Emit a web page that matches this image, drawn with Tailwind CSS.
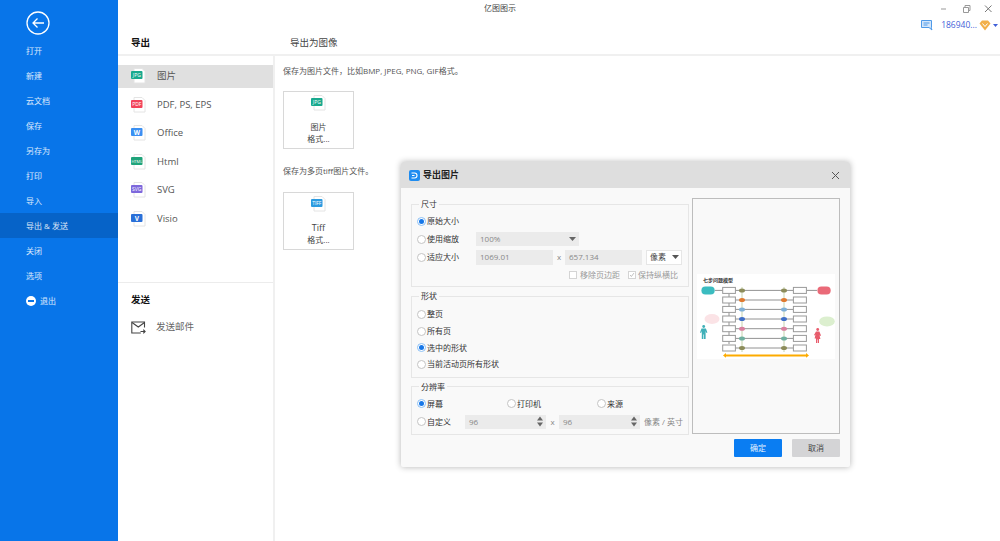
<!doctype html>
<html lang="zh">
<head>
  <meta charset="utf-8">
  <title>亿图图示</title>
  <script src="https://cdn.jsdelivr.net/npm/@tailwindcss/browser@4"></script>
</head>
<body class="relative flex w-[1000px] h-[541px] overflow-hidden bg-white font-['Open_Sans','Noto_Sans_CJK_SC',sans-serif] text-[8px] text-[#555]">

<!-- sidebar -->
<aside class="w-[118px] h-full bg-[#0875e9] text-white/85 shrink-0">
  <div class="pt-[11px] pl-[26px] h-[38px]">
    <svg width="24" height="24" viewBox="0 0 24 24" fill="none" stroke="white">
      <circle cx="12" cy="12" r="11" stroke-width="1.3"/>
      <path d="M18 12H7M11.5 7.5 7 12l4.5 4.5" stroke-width="1.3"/>
    </svg>
  </div>
  <div class="h-[25px] pl-[26px] flex items-center">打开</div>
  <div class="h-[25px] pl-[26px] flex items-center">新建</div>
  <div class="h-[25px] pl-[26px] flex items-center">云文档</div>
  <div class="h-[25px] pl-[26px] flex items-center">保存</div>
  <div class="h-[25px] pl-[26px] flex items-center">另存为</div>
  <div class="h-[25px] pl-[26px] flex items-center">打印</div>
  <div class="h-[25px] pl-[26px] flex items-center">导入</div>
  <div class="h-[25px] pl-[26px] flex items-center bg-[#0663c8]">导出 &amp; 发送</div>
  <div class="h-[25px] pl-[26px] flex items-center">关闭</div>
  <div class="h-[25px] pl-[26px] flex items-center">选项</div>
  <div class="h-[25px] pl-[26px] flex items-center gap-[4px]">
    <svg width="10" height="10" viewBox="0 0 10 10"><circle cx="5" cy="5" r="5" fill="white"/><rect x="2" y="4" width="6" height="2" fill="#0875e9"/></svg>
    退出
  </div>
</aside>

<div class="flex-1 flex flex-col min-w-0">
  <!-- header -->
  <header class="h-[56px] border-b-2 border-[#f0f0f0] shrink-0">
    <div class="h-[16px] flex items-center pl-[366px] pr-[7px] text-[#444]">
      <span>亿图图示</span>
      <div class="ml-auto flex items-center gap-[13px] text-[#888]">
        <svg width="9" height="9" viewBox="0 0 9 9" fill="none" stroke="#999"><path d="M1 5h5"/></svg>
        <svg width="9" height="9" viewBox="0 0 9 9" fill="none" stroke="#999"><path d="M1.500 3.500h5v5h-5zM3 3.500V1.500h5v5H6.500"/></svg>
        <svg width="9" height="9" viewBox="0 0 9 9" fill="none" stroke="#777"><path d="m1 1.500 6.500 6.500M7.500 1.500 1 8"/></svg>
      </div>
    </div>
    <div class="h-[18px] flex items-center justify-end">
      <svg class="mr-[8px]" width="12" height="11" viewBox="0 0 12 11" fill="none"><path d="M.5.500h10v7H10l1 2.500-3-2.500H.5z" fill="#d4e6fa" stroke="#4f9ae8"/><path d="M2.500 3h6M2.500 5h4" stroke="#4f9ae8"/></svg>
      <span class="text-[#3f5fd8] text-[8.500px]">186940...</span>
      <svg class="ml-[2px]" width="12" height="11" viewBox="0 0 12 11"><path d="M3 .5h6L11.500 3.500 6 10.500.5 3.500z" fill="#f2b04a"/><path d="m3.500 3.500 2.500 3 2.500-3" stroke="white" fill="none"/></svg>
      <svg class="ml-[2px] mr-[2px]" width="5" height="3" viewBox="0 0 5 3"><path d="M0 0h5L2.500 3z" fill="#3f5fd8"/></svg>
    </div>
    <div class="h-[18px] flex items-center">
      <span class="w-[172px] pl-[13px] text-[#111] font-bold text-[9.500px]">导出</span>
      <span class="text-[#444] text-[9.500px]">导出为图像</span>
    </div>
  </header>

  <div class="flex-1 flex min-h-0">
    <!-- export types -->
    <nav class="w-[157px] border-r-2 border-[#f0f0f0] flex flex-col pt-[9px] text-[9.500px] shrink-0">
      <div class="h-[22.500px] mb-[6px] flex items-center pl-[13px] gap-[10px] bg-[#e0e0e0]">
        <svg width="16" height="16" viewBox="0 0 16 16"><path d="M3 .5h8l3 3v11.500H3z" fill="white" stroke="#e4e4e4"/><rect y="3" width="11.500" height="8" rx="1" fill="#19a98e"/><text x="5.800" y="9" font-size="5" fill="white" text-anchor="middle">JPG</text></svg>
        <span>图片</span>
      </div>
      <div class="h-[22.500px] mb-[6px] flex items-center pl-[13px] gap-[10px]">
        <svg width="16" height="16" viewBox="0 0 16 16"><path d="M3 .5h8l3 3v11.500H3z" fill="white" stroke="#e4e4e4"/><rect y="3" width="11.500" height="8" rx="1" fill="#f2435a"/><text x="5.800" y="9" font-size="5" fill="white" text-anchor="middle">PDF</text></svg>
        <span>PDF, PS, EPS</span>
      </div>
      <div class="h-[22.500px] mb-[6px] flex items-center pl-[13px] gap-[10px]">
        <svg width="16" height="16" viewBox="0 0 16 16"><path d="M3 .5h8l3 3v11.500H3z" fill="white" stroke="#e4e4e4"/><rect y="3" width="11.500" height="8" rx="1" fill="#3a8ff2"/><text x="5.800" y="9.500" font-size="6.500" font-weight="bold" fill="white" text-anchor="middle">W</text></svg>
        <span>Office</span>
      </div>
      <div class="h-[22.500px] mb-[6px] flex items-center pl-[13px] gap-[10px]">
        <svg width="16" height="16" viewBox="0 0 16 16"><path d="M3 .5h8l3 3v11.500H3z" fill="white" stroke="#e4e4e4"/><rect y="3" width="11.500" height="8" rx="1" fill="#1fa37a"/><text x="5.800" y="8.800" font-size="4" fill="white" text-anchor="middle">HTML</text></svg>
        <span>Html</span>
      </div>
      <div class="h-[22.500px] mb-[6px] flex items-center pl-[13px] gap-[10px]">
        <svg width="16" height="16" viewBox="0 0 16 16"><path d="M3 .5h8l3 3v11.500H3z" fill="white" stroke="#e4e4e4"/><rect y="3" width="11.500" height="8" rx="1" fill="#7d68dc"/><text x="5.800" y="9" font-size="5" fill="white" text-anchor="middle">SVG</text></svg>
        <span>SVG</span>
      </div>
      <div class="h-[22.500px] flex items-center pl-[13px] gap-[10px]">
        <svg width="16" height="16" viewBox="0 0 16 16"><path d="M3 .5h8l3 3v11.500H3z" fill="white" stroke="#e4e4e4"/><rect y="3" width="11.500" height="8" rx="1" fill="#2a70d8"/><text x="5.800" y="9.500" font-size="6.500" font-weight="bold" fill="white" text-anchor="middle">V</text></svg>
        <span>Visio</span>
      </div>
      <div class="mt-[52px] border-t border-[#ececec] pl-[13px] pt-[10px]">
        <div class="text-[#111] font-bold h-[14px] leading-[14px]">发送</div>
        <div class="flex items-center gap-[10px] mt-[13px] text-[#666] h-[14px]">
          <svg width="15" height="13" viewBox="0 0 15 13" fill="none" stroke="#444" stroke-width="1.100"><path d="M13.500 6.500V1H.8v11h9"/><path d="m1 1.500 6.300 4.500 6.200-4.500"/><path d="M9.500 10.500h4.500m-1.700-1.800 1.800 1.800-1.800 1.800"/></svg>
          <span>发送邮件</span>
        </div>
      </div>
    </nav>

    <!-- export formats -->
    <main class="flex-1 pl-[8px] pt-[9px] text-[#555]">
      <p class="h-[12px] leading-[12px]">保存为图片文件，比如BMP, JPEG, PNG, GIF格式。</p>
      <div class="mt-[14px] w-[71px] h-[58px] border border-[#d8d8d8] flex flex-col items-center pt-[3px] text-[#444]">
        <svg width="16" height="16" viewBox="0 0 16 16"><path d="M3 .5h8l3 3v11.500H3z" fill="white" stroke="#e4e4e4"/><rect y="3" width="11.500" height="8" rx="1" fill="#19a98e"/><text x="5.800" y="9" font-size="5" fill="white" text-anchor="middle">JPG</text></svg>
        <span class="mt-[10px] leading-[12px]">图片</span>
        <span class="leading-[12px]">格式...</span>
      </div>
      <p class="mt-[16px] h-[12px] leading-[12px]">保存为多页tiff图片文件。</p>
      <div class="mt-[15px] w-[71px] h-[58px] border border-[#d8d8d8] flex flex-col items-center pt-[3px] text-[#444]">
        <svg width="16" height="16" viewBox="0 0 16 16"><path d="M3 .5h8l3 3v11.500H3z" fill="white" stroke="#e4e4e4"/><rect y="3" width="11.500" height="8" rx="1" fill="#2c9be0"/><text x="5.800" y="9" font-size="5" fill="white" text-anchor="middle">TIFF</text></svg>
        <span class="mt-[10px] leading-[12px] text-[9px]">Tiff</span>
        <span class="leading-[12px]">格式...</span>
      </div>
    </main>
  </div>
</div>

<!-- export dialog -->
<section class="absolute left-[401px] top-[162px] w-[449px] h-[305px] bg-[#f9f9f9] rounded-[2px] shadow-[0_0_6px_rgba(0,0,0,0.3)] text-[#333]">
  <div class="h-[26px] bg-[#dedede] flex items-center pl-[8px] pr-[10px] rounded-t-[2px]">
    <svg width="11" height="11" viewBox="0 0 11 11"><rect width="11" height="11" rx="2" fill="#1f8cf0"/><path d="M2.500 3h3a2.500 2.500 0 0 1 0 5h-3M3 5.500h2.500" fill="none" stroke="white" stroke-width="1.100"/></svg>
    <span class="ml-[3px] font-bold text-[9px] text-[#222]">导出图片</span>
    <svg class="ml-auto" width="9" height="9" viewBox="0 0 9 9" fill="none" stroke="#555"><path d="m1 1 7 7M8 1 1 8"/></svg>
  </div>

  <div class="flex pl-[10px] pt-[10px] gap-[3px]">
    <div class="w-[278px] shrink-0">
      <fieldset class="border border-[#e6e6e6] pl-[5px] pr-[5px] pb-[2px]">
        <legend class="ml-[2px] px-[2px] h-[12px] leading-[12px]">尺寸</legend>
        <div class="pt-[2px]">
          <div class="h-[18px] flex items-center">
            <span class="w-[9px] h-[9px] rounded-full border border-[#8cc0f5] bg-white flex items-center justify-center"><span class="w-[5px] h-[5px] rounded-full bg-[#1677e8]"></span></span>
            <span class="ml-[1px]">原始大小</span>
          </div>
          <div class="h-[18px] flex items-center">
            <span class="w-[59px] flex items-center shrink-0"><span class="w-[9px] h-[9px] rounded-full border border-[#c4c4c4] bg-white"></span><span class="ml-[1px]">使用缩放</span></span>
            <div class="w-[103px] h-[14px] bg-[#ebebeb] flex items-center pl-[4px] pr-[3px] text-[#888]">100%<svg class="ml-auto" width="7" height="4" viewBox="0 0 7 4"><path d="M0 0h7L3.500 4z" fill="#666"/></svg></div>
          </div>
          <div class="h-[18px] flex items-center">
            <span class="w-[59px] flex items-center shrink-0"><span class="w-[9px] h-[9px] rounded-full border border-[#c4c4c4] bg-white"></span><span class="ml-[1px]">适应大小</span></span>
            <div class="w-[77px] h-[15px] bg-[#ebebeb] flex items-center pl-[4px] text-[#888]">1069.01</div>
            <span class="w-[12px] text-center text-[#888]">x</span>
            <div class="w-[77px] h-[15px] bg-[#ebebeb] flex items-center pl-[4px] text-[#888]">657.134</div>
            <div class="ml-[4px] w-[36px] h-[15px] bg-white border border-[#e6e6e6] flex items-center pl-[3px] pr-[2px] text-[#444]">像素<svg class="ml-auto" width="7" height="4" viewBox="0 0 7 4"><path d="M0 0h7L3.500 4z" fill="#555"/></svg></div>
          </div>
          <div class="h-[18px] flex items-center justify-end pr-[5px] text-[#999]">
            <span class="w-[8px] h-[8px] border border-[#d4d4d4] bg-white"></span>
            <span class="ml-[3px]">移除页边距</span>
            <svg class="ml-[8px] bg-white border border-[#d4d4d4]" width="8" height="8" viewBox="0 0 8 8" fill="none" stroke="#aaa"><path d="m1.500 4 1.700 2 3.300-4.500"/></svg>
            <span class="ml-[2px]">保持纵横比</span>
          </div>
        </div>
      </fieldset>

      <fieldset class="mt-[3px] border border-[#e6e6e6] pl-[5px] pr-[5px] pb-[4px]">
        <legend class="ml-[2px] px-[2px] h-[12px] leading-[12px]">形状</legend>
        <div class="pt-[4px]">
          <div class="h-[16.700px] flex items-center"><span class="w-[9px] h-[9px] rounded-full border border-[#c4c4c4] bg-white"></span><span class="ml-[1px]">整页</span></div>
          <div class="h-[16.700px] flex items-center"><span class="w-[9px] h-[9px] rounded-full border border-[#c4c4c4] bg-white"></span><span class="ml-[1px]">所有页</span></div>
          <div class="h-[16.700px] flex items-center">
            <span class="w-[9px] h-[9px] rounded-full border border-[#8cc0f5] bg-white flex items-center justify-center"><span class="w-[5px] h-[5px] rounded-full bg-[#1677e8]"></span></span>
            <span class="ml-[1px]">选中的形状</span>
          </div>
          <div class="h-[16.700px] flex items-center"><span class="w-[9px] h-[9px] rounded-full border border-[#c4c4c4] bg-white"></span><span class="ml-[1px]">当前活动页所有形状</span></div>
        </div>
      </fieldset>

      <fieldset class="mt-[3px] border border-[#e6e6e6] pl-[5px] pr-[5px] pb-[3px]">
        <legend class="ml-[2px] px-[2px] h-[12px] leading-[12px]">分辨率</legend>
        <div class="pt-[2px]">
          <div class="h-[18px] flex items-center">
            <span class="w-[90px] flex items-center shrink-0">
              <span class="w-[9px] h-[9px] rounded-full border border-[#8cc0f5] bg-white flex items-center justify-center"><span class="w-[5px] h-[5px] rounded-full bg-[#1677e8]"></span></span>
              <span class="ml-[1px]">屏幕</span>
            </span>
            <span class="w-[90px] flex items-center shrink-0"><span class="w-[9px] h-[9px] rounded-full border border-[#c4c4c4] bg-white"></span><span class="ml-[1px]">打印机</span></span>
            <span class="flex items-center"><span class="w-[9px] h-[9px] rounded-full border border-[#c4c4c4] bg-white"></span><span class="ml-[1px]">来源</span></span>
          </div>
          <div class="h-[18px] flex items-center">
            <span class="w-[48px] flex items-center shrink-0"><span class="w-[9px] h-[9px] rounded-full border border-[#c4c4c4] bg-white"></span><span class="ml-[1px]">自定义</span></span>
            <div class="w-[81px] h-[14px] bg-[#ebebeb] flex items-center pl-[4px] pr-[3px] text-[#888]">96
              <svg class="ml-auto" width="6" height="11" viewBox="0 0 6 11"><path d="M0 4.500h6L3 .5zM0 6.500h6L3 10.500z" fill="#666"/></svg>
            </div>
            <span class="w-[13px] text-center text-[#888]">x</span>
            <div class="w-[81px] h-[14px] bg-[#ebebeb] flex items-center pl-[4px] pr-[3px] text-[#888]">96
              <svg class="ml-auto" width="6" height="11" viewBox="0 0 6 11"><path d="M0 4.500h6L3 .5zM0 6.500h6L3 10.500z" fill="#666"/></svg>
            </div>
            <span class="ml-[4px] text-[#888]">像素 / 英寸</span>
          </div>
        </div>
      </fieldset>
    </div>

    <!-- preview -->
    <div class="w-[148px] h-[236px] border border-[#bdbdbd] flex items-center justify-center">
      <svg width="138" height="85" viewBox="0 0 138 85" class="bg-white" fill="none">
        <text x="6" y="8" font-size="5" font-weight="bold" fill="#333">七步问题模型</text>
        <g stroke="#777" stroke-width="0.800">
          <path d="M18 16.400h78M109 16.400h11M38 26h58M38 35.400h58M38 45h58M38 54.700h58M38 64.400h58M38 74h58"/>
          <path d="M32 20v50"/>
        </g>
        <g stroke-width="0.800">
          <path d="M45 13v65M87 13v65" stroke="#b8c89a"/>
        </g>
        <g fill="white" stroke="#999">
          <rect x="25.700" y="13.400" width="12.700" height="6"/><rect x="25.700" y="23" width="12.700" height="6"/><rect x="25.700" y="32.400" width="12.700" height="6"/><rect x="25.700" y="42" width="12.700" height="6"/><rect x="25.700" y="51.700" width="12.700" height="6"/><rect x="25.700" y="61.400" width="12.700" height="6"/><rect x="25.700" y="71" width="12.700" height="6"/>
          <rect x="96.400" y="13.400" width="13" height="6"/><rect x="96.400" y="23" width="13" height="6"/><rect x="96.400" y="32.400" width="13" height="6"/><rect x="96.400" y="42" width="13" height="6"/><rect x="96.400" y="51.700" width="13" height="6"/><rect x="96.400" y="61.400" width="13" height="6"/><rect x="96.400" y="71" width="13" height="6"/>
        </g>
        <g fill="#8c8c5a"><ellipse cx="45" cy="16.400" rx="3" ry="2"/><ellipse cx="87" cy="16.400" rx="3" ry="2"/><ellipse cx="45" cy="74" rx="3" ry="2"/><ellipse cx="87" cy="74" rx="3" ry="2"/></g>
        <g fill="#e07a30"><ellipse cx="45" cy="26" rx="3" ry="2"/><ellipse cx="87" cy="26" rx="3" ry="2"/></g>
        <g fill="#7fb0d8"><ellipse cx="45" cy="35.400" rx="3" ry="2"/><ellipse cx="87" cy="35.400" rx="3" ry="2"/></g>
        <g fill="#4070c8"><ellipse cx="45" cy="45" rx="3" ry="2"/><ellipse cx="87" cy="45" rx="3" ry="2"/></g>
        <g fill="#d9809f"><ellipse cx="45" cy="54.700" rx="3" ry="2"/><ellipse cx="87" cy="54.700" rx="3" ry="2"/></g>
        <g fill="#70b0a0"><ellipse cx="45" cy="64.400" rx="3" ry="2"/><ellipse cx="87" cy="64.400" rx="3" ry="2"/></g>
        <rect x="4.400" y="12.500" width="13.300" height="8" rx="4" fill="#3bbcc0"/>
        <rect x="120.400" y="12.500" width="13.300" height="8" rx="4" fill="#ea6a78"/>
        <path d="M26 81.400 29 79v1.400h80V79l3 2.400-3 2.400v-1.400H29v1.400z" fill="#fdab00"/>
        <ellipse cx="15" cy="45" rx="7.500" ry="5" fill="#fbe3e6"/>
        <ellipse cx="130" cy="47.400" rx="7.800" ry="5" fill="#dcefcf"/>
        <g fill="#3fb0b8"><circle cx="6.700" cy="52.500" r="1.400"/><path d="M4.500 54.500h4.400l1.500 4-1 .5-.8-2v8H7v-4.500h-.6V65H4.800v-8l-.8 2-1-.5z"/></g>
        <g fill="#e85c6c"><circle cx="120.700" cy="55.500" r="1.400"/><path d="M119 57.500h3.400l1.600 4-1 .5-.6-1.500 1 4.500h-1.400V69h-1.200v-3.500h-.6V69h-1.200v-4.500h-1.400l1-4.500-.6 1.500-1-.5z"/></g>
      </svg>
    </div>
  </div>

  <div class="flex justify-end gap-[10px] pr-[10px] pt-[4px]">
    <button class="w-[48px] h-[18px] bg-[#0a7df2] text-white/90 rounded-[1px]">确定</button>
    <button class="w-[48px] h-[18px] bg-[#d4d4d6] text-[#444] rounded-[1px]">取消</button>
  </div>
</section>

</body>
</html>
